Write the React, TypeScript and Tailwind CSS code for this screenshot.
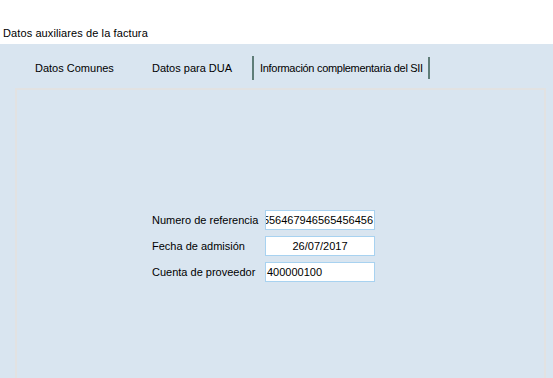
import React from "react";

const App: React.FC = () => {
  const fields = [
    { label: "Numero de referencia", value: "556467946565456456", align: "justify-end" },
    { label: "Fecha de admisión", value: "26/07/2017", align: "justify-center" },
    { label: "Cuenta de proveedor", value: "400000100", align: "justify-start" },
  ];

  return (
    <div
      className="w-[553px] h-[378px] bg-white flex flex-col overflow-hidden text-[11px] text-black"
      style={{ fontFamily: "'Liberation Sans', Arial, sans-serif" }}
    >
      {/* title */}
      <div className="h-[44px] pl-[3px] pt-[26px] leading-[14px] tracking-[0.1px]">Datos auxiliares de la factura</div>

      <div className="flex-1 bg-[#d9e5f0] flex flex-col">
        {/* tabs */}
        <div className="h-[44px] flex items-center pt-[4px] whitespace-nowrap">
          <div className="ml-[35px] w-[117px]">Datos Comunes</div>
          <div className="w-[100px]">Datos para DUA</div>
          <div className="w-[2px] h-[24px] bg-[#5f7d78]" />
          <div className="ml-[6px] w-[168px] tracking-[-0.3px]">Información complementaria del SII</div>
          <div className="w-[2px] h-[22px] bg-[#5f7d78]" />
        </div>

        {/* panel */}
        <div className="flex-1 ml-[15px] mr-[7px] border-2 border-b-0 border-[#e2e2e2] pt-[120px] pl-[135px]">
          <div className="flex flex-col gap-[6px]">
            {fields.map((f, i) => (
              <div key={i} className="flex items-center h-[20px]">
                <div className="w-[113px] whitespace-nowrap">{f.label}</div>
                <div
                  className={`w-[110px] h-[20px] bg-white border border-[#a8d2f0] flex items-center overflow-hidden whitespace-nowrap px-[1px] ${f.align}`}
                >
                  {f.value}
                </div>
              </div>
            ))}
          </div>
        </div>
      </div>
    </div>
  );
};

export default App;
